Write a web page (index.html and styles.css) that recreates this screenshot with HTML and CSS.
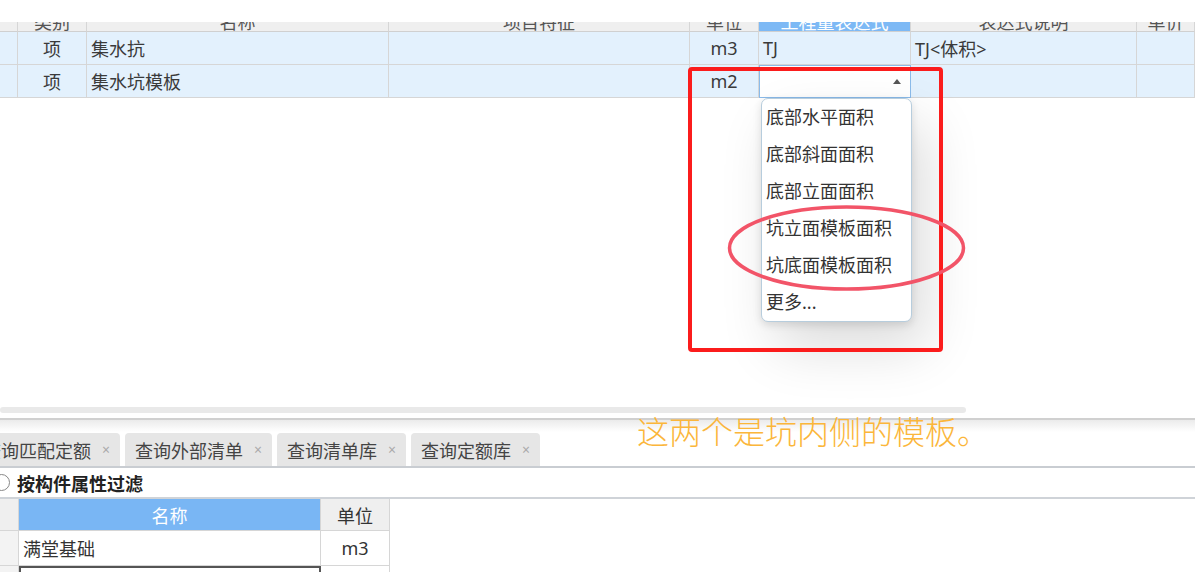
FILE: index.html
```html
<!DOCTYPE html>
<html lang="zh-CN">
<head>
    <meta charset="UTF-8">
    <meta name="viewport" content="width=device-width, initial-scale=1.0">
    <title>工程量表达式</title>
    <link rel="stylesheet" href="styles.css">
</head>
<body>
    <div class="page">
        <section class="top-panel">
            <div class="grid">
                <div class="cell head"><span></span></div>
                <div class="cell head"><span>类别</span></div>
                <div class="cell head"><span>名称</span></div>
                <div class="cell head"><span>项目特征</span></div>
                <div class="cell head"><span>单位</span></div>
                <div class="cell head active"><span>工程量表达式</span></div>
                <div class="cell head"><span>表达式说明</span></div>
                <div class="cell head"><span>单价</span></div>

                <div class="cell"></div>
                <div class="cell center">项</div>
                <div class="cell">集水抗</div>
                <div class="cell"></div>
                <div class="cell center">m3</div>
                <div class="cell">TJ</div>
                <div class="cell">TJ&lt;体积&gt;</div>
                <div class="cell"></div>

                <div class="cell"></div>
                <div class="cell center">项</div>
                <div class="cell">集水坑模板</div>
                <div class="cell"></div>
                <div class="cell center">m2</div>
                <div class="cell editor">
                    <span class="caret"></span>
                    <div class="menu">
                        <div class="menu-item">底部水平面积</div>
                        <div class="menu-item">底部斜面面积</div>
                        <div class="menu-item">底部立面面积</div>
                        <div class="menu-item">坑立面模板面积</div>
                        <div class="menu-item">坑底面模板面积</div>
                        <div class="menu-item">更多...</div>
                    </div>
                </div>
                <div class="cell"></div>
                <div class="cell"></div>
            </div>
        </section>

        <div class="hscroll"></div>
        <div class="splitter"></div>

        <div class="tabs">
            <div class="tab">查询匹配定额<span class="x">×</span></div>
            <div class="tab">查询外部清单<span class="x">×</span></div>
            <div class="tab">查询清单库<span class="x">×</span></div>
            <div class="tab">查询定额库<span class="x">×</span></div>
        </div>

        <div class="filter">
            <span class="radio"></span>
            <span>按构件属性过滤</span>
        </div>

        <div class="lib">
            <div class="c lib-head"></div>
            <div class="c lib-head active">名称</div>
            <div class="c lib-head">单位</div>

            <div class="c side"></div>
            <div class="c">满堂基础</div>
            <div class="c center">m3</div>

            <div class="c side"></div>
            <div class="c selected"></div>
            <div class="c"></div>
        </div>

        <!-- annotations drawn over the screenshot -->
        <div class="mark-box"></div>
        <svg class="mark-ring" width="241" height="88" viewBox="0 0 241 88">
            <ellipse cx="120.5" cy="44" rx="117" ry="41" fill="none" stroke="#f25468" stroke-width="3.5"/>
        </svg>
        <div class="note">这两个是坑内侧的模板。</div>
    </div>
</body>
</html>
```

FILE: styles.css
```css
body {
    margin: 0;
    padding: 0;
    font-family: "Noto Sans", "Noto Sans CJK SC", sans-serif;
    font-size: 18px;
    color: #3a3a3a;
    background-color: #fff;
    overflow: hidden;
}
.page {
    position: relative;
    width: 1195px;
    height: 572px;
    overflow: hidden;
}

/* top grid */
.top-panel {
    height: 407px;
    box-sizing: border-box;
    padding-top: 22px;
}
.grid {
    display: grid;
    grid-template-columns: 18px 69px 302px 301px 69px 152px 226px 1fr;
    grid-template-rows: 10px 33px 33px;
}
.cell {
    box-sizing: border-box;
    display: flex;
    align-items: center;
    padding: 0 4px;
    white-space: nowrap;
    background-color: #e3f1fd;
    border-right: 1px solid #d6d6d6;
    border-bottom: 1px solid #d6d6d6;
}
.cell.center {
    justify-content: center;
}
.head {
    background-color: #efefef;
    color: #555;
    overflow: hidden;
    align-items: flex-end;
    justify-content: center;
    border-bottom-color: #d0d0d0;
}
.head span {
    line-height: 24px;
    margin-bottom: -3px;
    flex-shrink: 0;
}
.head.active {
    background-color: #7db9f5;
    color: #fff;
}
.editor {
    position: relative;
    background-color: #fff;
    border: 1px solid #8bbbea;
    justify-content: flex-end;
    padding-right: 9px;
}
.caret {
    width: 0;
    height: 0;
    border-left: 4px solid transparent;
    border-right: 4px solid transparent;
    border-bottom: 5px solid #555;
}
.menu {
    position: absolute;
    top: calc(100% + 1px);
    left: 1px;
    width: 151px;
    box-sizing: border-box;
    background-color: #fff;
    border: 1px solid #b7cddd;
    border-radius: 7px;
    box-shadow: 0 3px 8px rgba(0, 0, 0, 0.12), 14px 26px 55px rgba(0, 0, 0, 0.14);
    z-index: 5;
}
.menu-item {
    height: 37px;
    line-height: 37px;
    padding-left: 4px;
    color: #333;
}

/* lower panel */
.hscroll {
    width: 966px;
    height: 6px;
    background-color: #e9e9e9;
    border-radius: 3px;
}
.splitter {
    margin-top: 5px;
    height: 12px;
    border-top: 2px solid #d0d0d0;
    background: linear-gradient(#ebebeb, #fff);
}
.tabs {
    display: flex;
    gap: 5px;
    height: 33px;
    margin-top: 1px;
    border-bottom: 2px solid #c9cdd2;
}
.tab {
    display: flex;
    align-items: center;
    padding: 0 7px 0 10px;
    background-color: #e6e6e6;
    border-radius: 4px 4px 0 0;
    color: #444;
    white-space: nowrap;
}
.tab:first-child {
    margin-left: -27px;
}
.tab .x {
    display: inline-block;
    width: 14px;
    margin-left: 8px;
    text-align: center;
    font-size: 14px;
    color: #aaa;
}
.filter {
    display: flex;
    align-items: center;
    gap: 7px;
    height: 29px;
    border-bottom: 2px solid #cfd3d8;
    color: #222;
    font-weight: bold;
}
.radio {
    width: 15px;
    height: 15px;
    margin-left: -7px;
    border: 1px solid #888;
    border-radius: 50%;
    background-color: #fff;
}
.lib {
    display: grid;
    grid-template-columns: 19px 302px 69px;
    grid-template-rows: 32px 35px 20px;
    width: 390px;
}
.lib .c {
    box-sizing: border-box;
    display: flex;
    align-items: center;
    padding: 0 4px;
    color: #333;
    border-right: 1px solid #d6d6d6;
    border-bottom: 1px solid #d6d6d6;
}
.lib .center {
    justify-content: center;
}
.lib-head {
    justify-content: center;
    background-color: #efefef;
}
.lib-head.active {
    background-color: #79b6f4;
    color: #fff !important;
}
.lib .side {
    background-color: #f3f3f3;
}
.lib .selected {
    border: 2px solid #555;
    border-bottom: none;
}

/* annotations */
.mark-box {
    position: absolute;
    left: 688px;
    top: 67px;
    width: 255px;
    height: 285px;
    box-sizing: border-box;
    border: 4px solid #fb1c1c;
    border-radius: 4px;
    z-index: 6;
}
.mark-ring {
    position: absolute;
    left: 726px;
    top: 204px;
    z-index: 7;
}
.note {
    position: absolute;
    left: 637px;
    top: 414px;
    font-family: "Noto Sans CJK SC", sans-serif;
    font-size: 32px;
    line-height: 32px;
    font-weight: 300;
    color: #fbb63a;
    white-space: nowrap;
}
```
